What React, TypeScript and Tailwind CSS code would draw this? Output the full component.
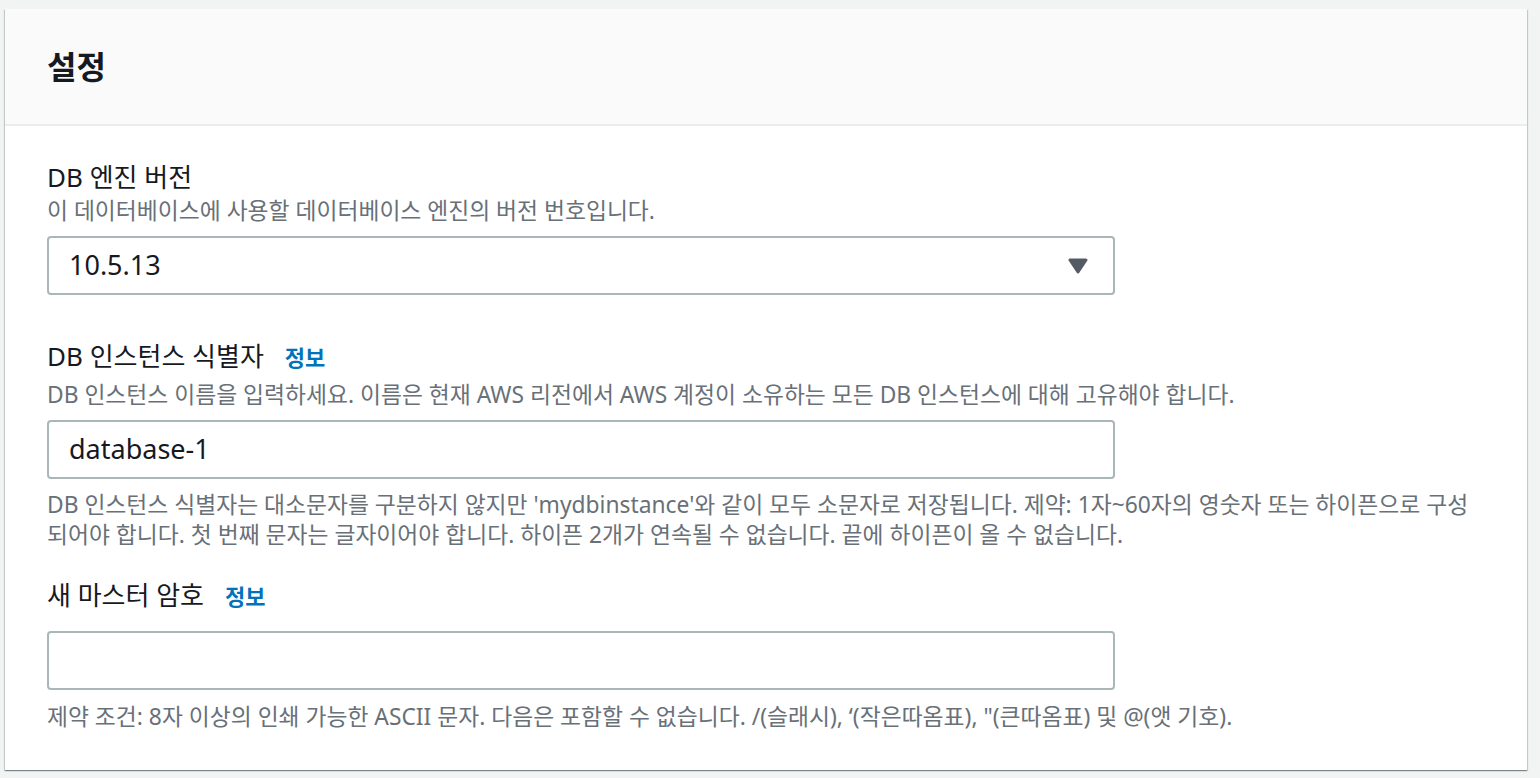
import type { FC } from "react";

const font = "font-['Noto_Sans','Noto_Sans_CJK_KR',sans-serif]";

const InfoLink: FC<{ className?: string }> = ({ className = "" }) => (
  <a href="#" className={`text-[22px] font-bold text-[#0073bb] ${className}`}>
    정보
  </a>
);

const App: FC = () => {
  return (
    <div className={`min-h-screen bg-[#f2f3f3] pt-[9px] pl-[5px] ${font}`}>
      <div className="w-[1522px] bg-white shadow-[0_1px_1px_0_rgba(0,28,36,0.3),1px_1px_1px_0_rgba(0,28,36,0.15),-1px_1px_1px_0_rgba(0,28,36,0.15)]">
        <div className="flex h-[117px] items-center border-b-2 border-[#eaeded] bg-[#fafafa] px-[42px]">
          <h2 className="text-[32px] font-bold text-[#16191f]">설정</h2>
        </div>

        <div className="pl-[42px] pr-[48px] pt-[34px] pb-[38px] text-[#16191f]">
          {/* 엔진 버전 */}
          <div className="text-[26px] leading-[34px]">DB 엔진 버전</div>
          <p className="mt-[2px] text-[22.8px] leading-[30px] text-[#687078]">
            이 데이터베이스에 사용할 데이터베이스 엔진의 버전 번호입니다.
          </p>
          <div className="mt-[10px] flex h-[59px] w-[1068px] items-center justify-between rounded-[4px] border-2 border-[#aab7b8] pl-[20px] pr-[25px]">
            <span className="text-[27px]">10.5.13</span>
            <svg width="20" height="16" viewBox="0 0 20 16">
              <polygon points="2,2 18,2 10,14" fill="#545b64" stroke="#545b64" strokeWidth="3" strokeLinejoin="round" />
            </svg>
          </div>

          {/* 인스턴스 식별자 */}
          <div className="mt-[44px] flex items-baseline text-[26px] leading-[34px]">
            <span>DB 인스턴스 식별자</span>
            <InfoLink className="ml-[21px]" />
          </div>
          <p className="mt-[6px] text-[22.8px] leading-[30px] text-[#687078]">
            DB 인스턴스 이름을 입력하세요. 이름은 현재 AWS 리전에서 AWS 계정이 소유하는 모든 DB 인스턴스에 대해 고유해야 합니다.
          </p>
          <div className="mt-[10px] flex h-[59px] w-[1068px] items-center rounded-[4px] border-2 border-[#aab7b8] pl-[20px]">
            <span className="text-[27px]">database-1</span>
          </div>
          <p className="mt-[11px] text-[22.8px] leading-[30px] text-[#687078]">
            DB 인스턴스 식별자는 대소문자를 구분하지 않지만 'mydbinstance'와 같이 모두 소문자로 저장됩니다. 제약: 1자~60자의 영숫자 또는 하이픈으로 구성되어야 합니다. 첫 번째 문자는 글자이어야 합니다. 하이픈 2개가 연속될 수 없습니다. 끝에 하이픈이 올 수 없습니다.
          </p>

          {/* 마스터 암호 */}
          <div className="mt-[28px] flex items-baseline text-[26px] leading-[34px]">
            <span>새 마스터 암호</span>
            <InfoLink className="ml-[21px]" />
          </div>
          <div className="mt-[18px] h-[59px] w-[1068px] rounded-[4px] border-2 border-[#aab7b8]" />
          <p className="mt-[12px] text-[22.8px] leading-[30px] text-[#687078]">
            제약 조건: 8자 이상의 인쇄 가능한 ASCII 문자. 다음은 포함할 수 없습니다. /(슬래시), ‘(작은따옴표), "(큰따옴표) 및 @(앳 기호).
          </p>
        </div>
      </div>
    </div>
  );
};

export default App;
